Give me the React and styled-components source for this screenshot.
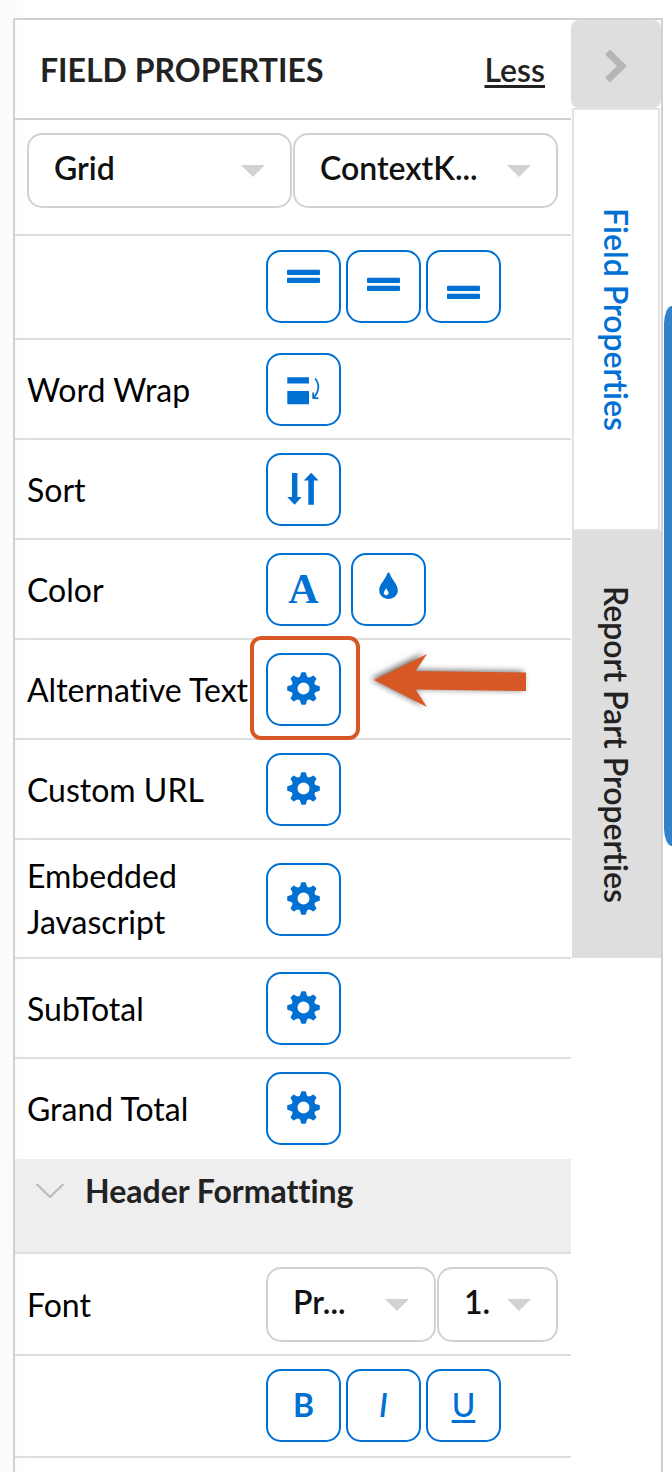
import { useId } from "react";
import styled, { createGlobalStyle } from "styled-components";

const TEETH = [0, 45, 90, 135, 180, 225, 270, 315];

function GearIcon() {
    return (
        <svg width="33" height="33" viewBox="-16.5 -16.5 33 33" aria-hidden="true">
            <circle r="9" fill="none" stroke="currentColor" strokeWidth="6" />
            {TEETH.map(angle => (
                <path
                    key={angle}
                    d="M-5 -10 C-3.5 -12 -3 -13 -2.5 -15.5 Q-2.3 -16.3 -1.5 -16.3 L1.5 -16.3 Q2.3 -16.3 2.5 -15.5 C3 -13 3.5 -12 5 -10 Z"
                    fill="currentColor"
                    transform={`rotate(${angle})`}
                />
            ))}
        </svg>
    );
}

function AlignIcon({ y }) {
    return (
        <svg width="33" height="33" viewBox="0 0 33 33" fill="currentColor" aria-hidden="true">
            <rect x="0" y={y} width="33" height="5.4" rx="1" />
            <rect x="0" y={y + 8} width="33" height="5.4" rx="1" />
        </svg>
    );
}

function WrapIcon() {
    return (
        <svg width="33" height="33" viewBox="0 0 33 33" aria-hidden="true">
            <path d="M0.3 5.2H22V11.6H0.3ZM0.3 19H22V32.3H0.3Z" fill="currentColor" />
            <path d="M28 6.5C32.3 11 33 19 26.6 25.6M26.2 20.4V26L31.4 26.4" fill="none" stroke="currentColor" strokeWidth="1.8" />
        </svg>
    );
}

function SortIcon() {
    return (
        <svg width="33" height="33" viewBox="0 0 33 33" fill="currentColor" aria-hidden="true">
            <path d="M5 1H10.4V25H14.6L7.6 32.7L0.2 25H5Z" />
            <path d="M24.2 0.8L31.6 8.6H26.9V32.8H21.3V8.6H16.7Z" />
        </svg>
    );
}

function DropIcon() {
    return (
        <svg width="33" height="33" viewBox="0.5 0 33 33" aria-hidden="true">
            <path d="M17 0.5C17.8 0.5 18 1 18.5 2.3C20.5 7.8 26.3 12.5 26.3 18.3C26.3 23.6 22.1 27 17 27S7.7 23.6 7.7 18.3C7.7 12.5 13.5 7.8 15.5 2.3C16 1 16.2 0.5 17 0.5Z" fill="currentColor" />
            <path d="M14.6 16C15 18 17.1 19 17.1 21C17.1 22.4 16 23.2 14.7 23.2S12.3 22.4 12.3 21C12.3 19 14.2 18 14.6 16Z" fill="#FFFFFF" />
        </svg>
    );
}

function ChevronDown() {
    return (
        <svg width="30" height="16" viewBox="0 0 30 16" fill="none" aria-hidden="true">
            <path d="M1.5 1L15 14L28.5 1" stroke="#B9B9B9" strokeWidth="2" />
        </svg>
    );
}

function Dropdown({ id, label, value, grow }) {
    return (
        <DropdownWrapper $grow={grow}>
            <Select id={id} aria-label={label} defaultValue={value}>
                <option>{value}</option>
            </Select>
            <Caret width="24" height="12" viewBox="0 0 24 12" aria-hidden="true">
                <path d="M0 0H24L12 12Z" fill="#D2D2D2" />
            </Caret>
        </DropdownWrapper>
    );
}

function SettingRow({ label, highlighted, last }) {
    const id = useId();

    return (
        <Row $last={last}>
            <Label id={id}>{label}</Label>
            <Controls>
                <ButtonHolder>
                    <ToolButton type="button" aria-labelledby={id}>
                        <GearIcon />
                    </ToolButton>
                    {highlighted && <Highlight />}
                    {highlighted && (
                        <Pointer width="160" height="60" viewBox="0 0 160 60" aria-hidden="true">
                            <path d="M3 30L56 4L44.5 21L155 22.5V41L44.5 39.5L56 57Z" fill="#D75725" />
                        </Pointer>
                    )}
                </ButtonHolder>
            </Controls>
        </Row>
    );
}

export default function App() {
    return (
        <>
            <GlobalStyle />
            <Panel>
                <Main>
                    <Header>
                        <Title>FIELD PROPERTIES</Title>
                        <LessLink href="#less">Less</LessLink>
                    </Header>
                    <PickerRow>
                        <Dropdown label="Report part" value="Grid" />
                        <Dropdown label="Field" value="ContextK..." />
                    </PickerRow>
                    <AlignRow>
                        <Label />
                        <Controls>
                            <ToolButton type="button" aria-label="Align top"><AlignIcon y={0.7} /></ToolButton>
                            <ToolButton type="button" aria-label="Align middle"><AlignIcon y={8.7} /></ToolButton>
                            <ToolButton type="button" aria-label="Align bottom"><AlignIcon y={16.7} /></ToolButton>
                        </Controls>
                    </AlignRow>
                    <Row>
                        <Label>Word Wrap</Label>
                        <Controls>
                            <ToolButton type="button" aria-label="Word Wrap"><WrapIcon /></ToolButton>
                        </Controls>
                    </Row>
                    <Row>
                        <Label>Sort</Label>
                        <Controls>
                            <ToolButton type="button" aria-label="Sort"><SortIcon /></ToolButton>
                        </Controls>
                    </Row>
                    <Row>
                        <Label>Color</Label>
                        <ColorControls>
                            <SerifButton type="button" aria-label="Text color">A</SerifButton>
                            <ToolButton type="button" aria-label="Cell color"><DropIcon /></ToolButton>
                        </ColorControls>
                    </Row>
                    <SettingRow label="Alternative Text" highlighted />
                    <SettingRow label="Custom URL" />
                    <SettingRow label="Embedded Javascript" />
                    <SettingRow label="SubTotal" />
                    <SettingRow label="Grand Total" last />
                    <SectionButton type="button" aria-expanded="true">
                        <ChevronDown />
                        Header Formatting
                    </SectionButton>
                    <Row>
                        <Label as="label" htmlFor="font-family">Font</Label>
                        <FontControls>
                            <Dropdown id="font-family" value="Pr..." grow={170} />
                            <Dropdown label="Font size" value="1." grow={121} />
                        </FontControls>
                    </Row>
                    <StyleRow>
                        <Label />
                        <Controls>
                            <BoldButton type="button">B</BoldButton>
                            <ItalicButton type="button">I</ItalicButton>
                            <UnderlineButton type="button">U</UnderlineButton>
                        </Controls>
                    </StyleRow>
                </Main>
                <Side>
                    <CollapseButton type="button" aria-label="Collapse panel">
                        <svg width="22" height="34" viewBox="0 0 22 34" fill="none" aria-hidden="true">
                            <path d="M2.5 3L17 17L2.5 31" stroke="#B5B5B5" strokeWidth="7" />
                        </svg>
                    </CollapseButton>
                    <Tab type="button" $active>Field Properties</Tab>
                    <Tab type="button">Report Part Properties</Tab>
                </Side>
            </Panel>
            <EdgeTab />
        </>
    );
}

const GlobalStyle = createGlobalStyle`
    * {
        box-sizing: border-box;
    }

    body {
        margin: 0;
        background: linear-gradient(to right, #FAFAFA, #FFFFFF 30px);
        color: #000000;
        font-family: Lato, "Open Sans", sans-serif;
        font-size: 32px;
        font-variant-ligatures: none;
    }

    button, select {
        margin: 0;
        font-family: inherit;
        font-size: inherit;
        font-variant-ligatures: inherit;
        color: inherit;
        cursor: pointer;
    }
`;

const Panel = styled.div`
    display: flex;
    min-height: calc(100vh - 18px);
    margin: 18px 9px 0 13px;
    border: 2px solid #D1D1D1;
    border-bottom: none;
`;

const Main = styled.main`
    flex: 1;
    min-width: 0;
`;

const Header = styled.header`
    display: flex;
    justify-content: space-between;
    align-items: center;
    height: 100px;
    padding: 0 26px 0 25px;
    border-bottom: 2px solid #D1D1D1;
    color: #222222;
`;

const Title = styled.h1`
    margin: 0;
    font-size: 32px;
    font-weight: 700;
`;

const LessLink = styled.a`
    color: inherit;
    font-weight: 600;
    text-decoration-thickness: 3px;
    text-underline-offset: 3px;
`;

const PickerRow = styled.div`
    display: flex;
    gap: 1px;
    padding: 13px 13px 26px 12px;
    border-bottom: 2px solid #DEDEDE;
`;

const Row = styled.div`
    display: flex;
    align-items: center;
    min-height: 100px;
    padding: 13px 13px 12px 12px;
    border-bottom: 2px solid ${props => props.$last ? "transparent" : "#DEDEDE"};
`;

const AlignRow = styled(Row)`
    padding-top: 14px;
    padding-bottom: 15px;
`;

const StyleRow = styled(Row)`
    padding-bottom: 14px;
`;

const Label = styled.span`
    flex: none;
    width: 239px;
    padding-right: 8px;
    line-height: 46px;
`;

const Controls = styled.div`
    flex: 1;
    display: flex;
    gap: 5px;
`;

const ColorControls = styled(Controls)`
    gap: 10px;
`;

const FontControls = styled(Controls)`
    gap: 1px;
`;

const ButtonHolder = styled.div`
    position: relative;
`;

const ToolButton = styled.button`
    display: flex;
    justify-content: center;
    align-items: center;
    width: 75px;
    height: 73px;
    padding: 0 0 2px;
    border: 2px solid #0070D2;
    border-radius: 15px;
    background: #FFFFFF;
    color: #0070D2;
`;

const SerifButton = styled(ToolButton)`
    font-family: "Liberation Serif", serif;
    font-size: 42px;
    font-weight: 700;
`;

const BoldButton = styled(ToolButton)`
    font-weight: 700;
`;

const ItalicButton = styled(ToolButton)`
    font-style: italic;
    font-weight: 600;
`;

const UnderlineButton = styled(ToolButton)`
    font-weight: 500;
    text-decoration: underline;
    text-decoration-thickness: 3px;
    text-underline-offset: 3px;
`;

const Highlight = styled.div`
    position: absolute;
    inset: -17px -19px -14px -16px;
    border: 4px solid #D75725;
    border-radius: 11px;
    pointer-events: none;
`;

const Pointer = styled.svg`
    position: absolute;
    left: 105px;
    top: -3px;
    overflow: visible;
    filter: drop-shadow(-3px -1px 3px rgba(0, 0, 0, 0.6));
    pointer-events: none;
`;

const DropdownWrapper = styled.div`
    position: relative;
    flex: ${props => props.$grow || 1} 1 0;
    min-width: 0;
`;

const Select = styled.select`
    display: block;
    width: 100%;
    height: 75px;
    padding: 0 50px 6px 25px;
    border: 2px solid #D2D2D2;
    border-radius: 15px;
    background: #FFFFFF;
    color: #111111;
    font-weight: 600;
    appearance: none;
`;

const Caret = styled.svg`
    position: absolute;
    right: 27px;
    top: 32px;
    pointer-events: none;
`;

const SectionButton = styled.button`
    display: flex;
    align-items: center;
    gap: 20px;
    width: 100%;
    padding: 12px 20px 41px;
    border: none;
    border-bottom: 2px solid #DEDEDE;
    background: #EEEEEE;
    color: #222222;
    font-weight: 700;
    line-height: 40px;
`;

const Side = styled.aside`
    display: flex;
    flex-direction: column;
    width: 90px;
`;

const CollapseButton = styled.button`
    display: flex;
    justify-content: center;
    align-items: center;
    height: 88px;
    padding: 4px 0 0;
    border: none;
    border-radius: 8px;
    background: #DEDEDE;
`;

const Tab = styled.button`
    height: ${props => props.$active ? "423px" : "427px"};
    margin: 0 ${props => props.$active ? "1px" : "0"} 0 1px;
    padding: 0;
    border: 2px solid ${props => props.$active ? "#E3E3E3" : "#DEDEDE"};
    background: ${props => props.$active ? "#FFFFFF" : "#DEDEDE"};
    color: ${props => props.$active ? "#0070D2" : "#222222"};
    writing-mode: vertical-rl;
    font-weight: 600;
`;

const EdgeTab = styled.div`
    position: absolute;
    right: 0;
    top: 306px;
    width: 8px;
    height: 540px;
    border-radius: 8px 0 0 8px / 18px 0 0 18px;
    background: #3182C8;
`;
